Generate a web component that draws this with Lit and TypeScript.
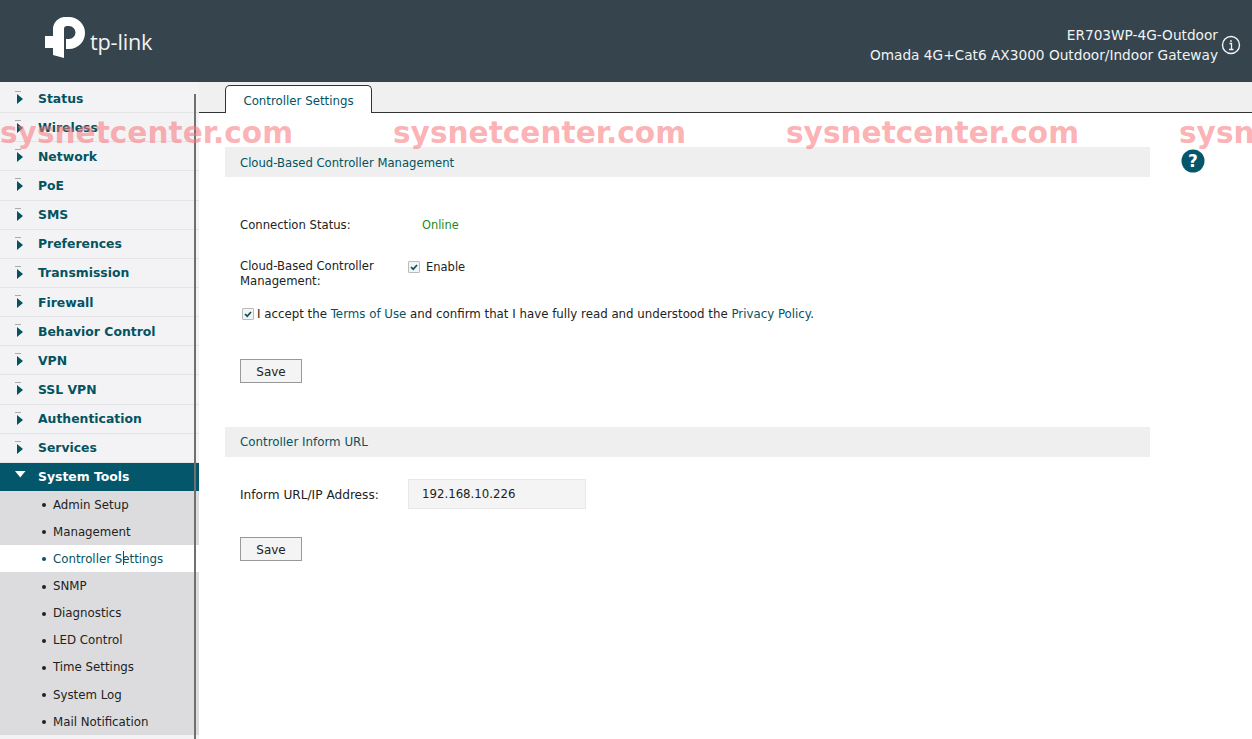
import { LitElement, html, css } from "lit";
import { customElement } from "lit/decorators.js";

const MENU = ["Status","Wireless","Network","PoE","SMS","Preferences","Transmission","Firewall","Behavior Control","VPN","SSL VPN","Authentication","Services"];
const SUB = ["Admin Setup","Management","Controller Settings","SNMP","Diagnostics","LED Control","Time Settings","System Log","Mail Notification"];

@customElement("app-root")
export class AppRoot extends LitElement {
  static styles = css`
    :host { display: block; width: 1252px; height: 739px; overflow: hidden; position: relative; background: #fff;
      font-family: "DejaVu Sans", sans-serif; font-size: 11.8px; color: #222; }
    * { box-sizing: border-box; }
    .header { height: 82px; background: #36444d; display: flex; justify-content: space-between; align-items: center; padding: 0 11px 0 45px; color: #f1f3f4; }
    .logo { display: flex; align-items: center; gap: 1px; }
    .mark { margin-top: -4px; }
    .logotext { font-family: "Open Sans", sans-serif; font-size: 21.7px; color: #f2f2f2; letter-spacing: -.2px; margin-top: 1px; }
    .model { display: flex; align-items: center; gap: 3px; font-size: 13.7px; text-align: right; line-height: 20px; margin-top: 8px; }
    .body { display: flex; height: 657px; }
    .side { width: 199px; background: #f3f3f6; flex: none; position: relative; padding-top: 2px; }
    .scroll { position: absolute; left: 194px; top: 12px; bottom: 0; width: 2px; background: #707070; z-index: 2; }
    .m { height: 29.15px; display: flex; align-items: center; padding-left: 38px; font-weight: 700; font-size: 12.4px; color: #04535f; border-bottom: 1px solid #e4e4e6; position: relative; }
    .m.open { background: #04566a; color: #fff; border-bottom: none; height: 28.2px; }
    .arrow { position: absolute; left: 15px; top: 7px; }
    .arrow.down { left: 15px; top: 8px; }
    .subs { background: #dcdcde; height: 244px; }
    .s { height: 27.15px; display: flex; align-items: center; padding-left: 42px; gap: 7px; color: #222; font-size: 11.8px; position: relative; }
    .s i { width: 4px; height: 4px; border-radius: 50%; background: currentColor; margin-top: 1px; }
    .s.on { background: #fff; color: #04535f; }
    .caret { position: absolute; left: 123px; top: 6px; width: 1px; height: 14px; background: #04535f; }
    .main { flex: 1; min-width: 0; }
    .tabs { height: 31px; background: #f0f0f0; border-bottom: 1px solid #333; padding: 3px 0 0 26px; display: flex; }
    .tab { width: 147px; height: 28px; background: #fff; border: 1px solid #333; border-bottom: none; border-radius: 5px 5px 0 0; color: #04535f; text-align: center; line-height: 30px; font-size: 11.8px; }
    .content { padding: 34px 0 0 26px; position: relative; }
    .bar { width: 925px; height: 30px; background: #efefef; color: #04535f; line-height: 32px; padding-left: 15px; font-size: 11.65px; }
    .help { position: absolute; left: 982px; top: 36px; }
    .row { display: flex; padding-left: 15px; }
    .label { width: 168px; line-height: 15px; font-size: 11.65px; }
    .status { margin-top: 41px; }
    .status .label { width: 182px; }
    .online { color: #1a8a1a; font-size: 11.4px; line-height: 15px; }
    .cloud { margin-top: 26px; }
    .chk { width: 12px; height: 12px; border: 1px solid #bbb; border-radius: 1px; background: #f4f4f4; display: inline-flex; flex: none; }
    .en { display: flex; align-items: center; gap: 6px; height: 15px; font-size: 11.5px; }
    .accept { margin-top: 15px; padding-left: 17px; align-items: center; gap: 3px; height: 20px; }
    .accept a { color: #04535f; }
    .save { display: block; width: 62px; height: 24px; margin-left: 15px; background: #f4f4f4; border: 1px solid #999; font: inherit; font-size: 12px; color: #222; padding: 1px 0 0; }
    .s1 { margin-top: 35px; }
    .bar2 { margin-top: 44px; font-size: 11.85px; line-height: 30px; }
    .url { margin-top: 22px; align-items: center; }
    .url .label { font-size: 12.15px; padding-top: 2px; }
    .input { width: 178px; height: 30px; background: #f4f4f4; border: 1px solid #e8e8e8; line-height: 29px; padding-left: 13px; font-size: 11.75px; }
    .s2 { margin-top: 28px; }
    .wm { position: absolute; top: 114px; left: 0; display: flex; z-index: 5; pointer-events: none; }
    .wm span { width: 393px; flex: none; font-family: "DejaVu Sans", sans-serif; font-weight: 700; font-size: 29.6px; line-height: 38px; color: rgba(250,120,125,.58); white-space: nowrap; }
  `;

  check() {
    return html`<span class="chk"><svg width="10" height="10" viewBox="0 0 10 10"><path d="M2 5l2.200 2.200L8 3" fill="none" stroke="#04535f" stroke-width="1.700"/></svg></span>`;
  }

  render() {
    return html`
      <div class="header">
        <div class="logo">
          <svg class="mark" width="44" height="44" viewBox="0 0 44 44"><path fill="#fff" d="M8 19V12A12 12 0 0 1 21 0h3a16 16 0 0 1 0 32h-3v-10h3a6.500 6.500 0 0 0 0-13h-2a3 3 0 0 0-3 3V41l-11-3V31H0V19z"/></svg>
          <span class="logotext">tp-link</span>
        </div>
        <div class="model">
          <div>ER703WP-4G-Outdoor<br />Omada 4G+Cat6 AX3000 Outdoor/Indoor Gateway</div>
          <svg width="20" height="20" viewBox="0 0 20 20"><circle cx="10" cy="10" r="8.500" fill="none" stroke="#f1f3f4" stroke-width="1.400"/><path d="M8.500 8.500h2v6M8 14.500h4.500M10 5v2" fill="none" stroke="#f1f3f4" stroke-width="1.300"/></svg>
        </div>
      </div>
      <div class="body">
        <div class="side">
          <div class="scroll"></div>
          ${MENU.map(m => html`<div class="m"><svg class="arrow" width="9" height="14" viewBox="0 0 9 14"><path d="M0 .5h6" stroke="#aaa" fill="none"/><path d="M2 3l6 5-6 5z" fill="#04535f"/></svg>${m}</div>`)}
          <div class="m open"><svg class="arrow down" width="11" height="7" viewBox="0 0 11 7"><path d="M0 0h10.500L5.250 6.500z" fill="#fff"/></svg>System Tools</div>
          <div class="subs">
            ${SUB.map(s => html`<div class="s ${s === "Controller Settings" ? "on" : ""}"><i></i>${s}${s === "Controller Settings" ? html`<span class="caret"></span>` : ""}</div>`)}
          </div>
        </div>
        <div class="main">
          <div class="tabs"><div class="tab">Controller Settings</div></div>
          <div class="content">
            <div class="bar">Cloud-Based Controller Management</div>
            <svg class="help" width="24" height="24" viewBox="0 0 24 24"><circle cx="12" cy="12" r="11.500" fill="#04566a"/><text x="12" y="18" text-anchor="middle" fill="#fff" font-family="DejaVu Sans" font-weight="700" font-size="17">?</text></svg>
            <div class="row status"><div class="label">Connection Status:</div><div class="online">Online</div></div>
            <div class="row cloud"><div class="label">Cloud-Based Controller Management:</div><div class="en">${this.check()}<span>Enable</span></div></div>
            <div class="row accept">${this.check()}<span>I accept the <a>Terms of Use</a> and confirm that I have fully read and understood the <a>Privacy Policy</a>.</span></div>
            <button class="save s1">Save</button>
            <div class="bar bar2">Controller Inform URL</div>
            <div class="row url"><div class="label">Inform URL/IP Address:</div><div class="input">192.168.10.226</div></div>
            <button class="save s2">Save</button>
          </div>
        </div>
      </div>
      <div class="wm"><span>sysnetcenter.com</span><span>sysnetcenter.com</span><span>sysnetcenter.com</span><span>sysnetcenter.com</span></div>
    `;
  }
}
